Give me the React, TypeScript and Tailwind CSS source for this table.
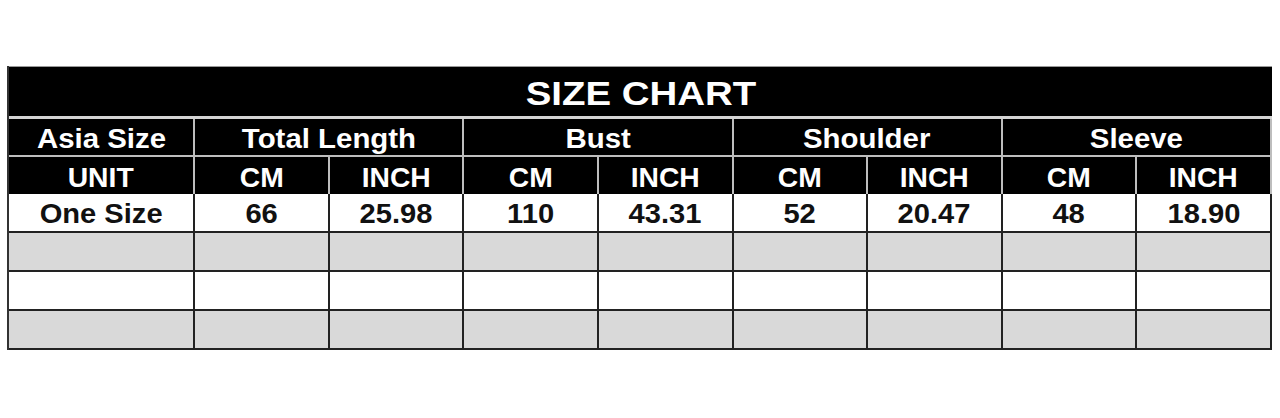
const font = { fontFamily: '"Liberation Sans", Arial, sans-serif' };

const groups = ["Total Length", "Bust", "Shoulder", "Sleeve"];
const values = ["66", "25.98", "110", "43.31", "52", "20.47", "48", "18.90"];

const Txt = ({ children, size }: { children: React.ReactNode; size: string }) => (
  <span className={`inline-block font-bold leading-none ${size}`}>{children}</span>
);

const EmptyRow = ({ grey }: { grey: boolean }) => (
  <div
    className={`grid grid-cols-[186px_repeat(8,1fr)] h-[39px] border-b-2 border-[#222] ${
      grey ? "bg-[#d9d9d9]" : "bg-white"
    }`}
  >
    {Array.from({ length: 9 }).map((_, i) => (
      <div key={i} className="border-r-2 border-[#222]" />
    ))}
  </div>
);

const App = () => {
  return (
    <div className="w-[1280px] h-[418px] bg-white pt-[66px] pl-[7px]" style={font}>
      <div className="w-[1265px] border-l-2 border-[#333]">
        {/* title */}
        <div className="h-[50px] bg-black flex items-center justify-center text-white border-t border-[#999] pt-[2px]">
          <Txt size="text-[34px] scale-x-[1.13]">SIZE CHART</Txt>
        </div>
        <div className="h-[3px] bg-[#d4d4d4]" />

        {/* header row 1 */}
        <div className="grid grid-cols-[186px_repeat(4,1fr)] h-[38px] bg-black text-white border-b-2 border-[#bdbdbd]">
          <div className="flex items-center justify-center pt-[3px] border-r-2 border-[#bdbdbd]">
            <Txt size="text-[28px] scale-x-[1.05]">Asia Size</Txt>
          </div>
          {groups.map((g) => (
            <div key={g} className="flex items-center justify-center pt-[3px] border-r-2 border-[#bdbdbd]">
              <Txt size="text-[28px] scale-x-[1.05]">{g}</Txt>
            </div>
          ))}
        </div>

        {/* header row 2 */}
        <div className="grid grid-cols-[186px_repeat(8,1fr)] h-[37px] bg-black text-white">
          <div className="flex items-center justify-center pt-[4px] border-r-2 border-[#bdbdbd]">
            <Txt size="text-[28px] scale-x-[1.01]">UNIT</Txt>
          </div>
          {groups.flatMap((g) => [
            <div key={g + "cm"} className="flex items-center justify-center pt-[4px] border-r-2 border-[#bdbdbd]">
              <Txt size="text-[28px] scale-x-[1.01]">CM</Txt>
            </div>,
            <div key={g + "in"} className="flex items-center justify-center pt-[4px] border-r-2 border-[#bdbdbd]">
              <Txt size="text-[28px] scale-x-[1.01]">INCH</Txt>
            </div>,
          ])}
        </div>

        {/* data */}
        <div className="grid grid-cols-[186px_repeat(8,1fr)] h-[39px] bg-white text-[#111] border-b-2 border-[#222]">
          <div className="flex items-center justify-center pt-[3px] border-r-2 border-[#222]">
            <Txt size="text-[28px] scale-x-[1.04]">One Size</Txt>
          </div>
          {values.map((v, i) => (
            <div key={i} className="flex items-center justify-center pt-[3px] border-r-2 border-[#222]">
              <Txt size="text-[28px] scale-x-[1.04]">{v}</Txt>
            </div>
          ))}
        </div>
        <EmptyRow grey />
        <EmptyRow grey={false} />
        <EmptyRow grey />
      </div>
    </div>
  );
};

export default App;
